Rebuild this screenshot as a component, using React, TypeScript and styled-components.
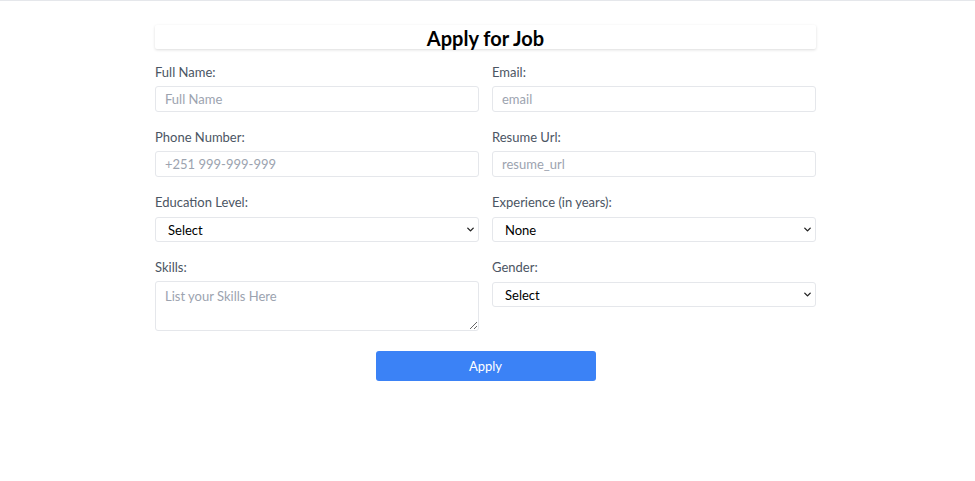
import React from "react";
import styled, { createGlobalStyle } from "styled-components";
import { ChevronDown } from "lucide-react";

const Global = createGlobalStyle`
  * { box-sizing: border-box; }
  html, body { margin: 0; padding: 0; background: #fff; }
  body { font-family: Lato, "Noto Sans", sans-serif; border-top: 1px solid #e5e7eb; }
`;

const Page = styled.div`
  display: flex;
  justify-content: center;
  padding-top: 24px;
  padding-right: 4px;
`;

const Card = styled.form`
  width: 661px;
  display: flex;
  flex-direction: column;
`;

const Header = styled.div`
  height: 24px;
  display: flex;
  align-items: center;
  justify-content: center;
  box-shadow: 0 1px 3px rgba(0, 0, 0, 0.14);
  border-radius: 2px;
`;

const Title = styled.h1`
  margin: 0;
  font-size: 20px;
  font-weight: 700;
  color: #000;
  line-height: 24px;
  padding-top: 2px;
`;

const Grid = styled.div`
  display: grid;
  grid-template-columns: 324px 324px;
  column-gap: 13px;
  row-gap: 16px;
  margin-top: 14px;
`;

const Field = styled.div`
  display: flex;
  flex-direction: column;
`;

const Label = styled.label`
  font-size: 13px;
  color: #4b5563;
  line-height: 18px;
  margin-bottom: 5px;
`;

const Input = styled.input`
  height: 26px;
  border: 1px solid #e5e7eb;
  border-radius: 3px;
  padding: 0 9px;
  font-family: inherit;
  font-size: 13px;
  color: #111;
  outline: none;
  &::placeholder { color: #9ca3af; }
`;

const TextArea = styled.textarea`
  height: 50px;
  border: 1px solid #e5e7eb;
  border-radius: 3px;
  padding: 6px 9px;
  font-family: inherit;
  font-size: 13px;
  color: #111;
  resize: vertical;
  outline: none;
  &::placeholder { color: #9ca3af; }
`;

const SelectWrap = styled.div`
  position: relative;
  height: 25px;
  margin-top: 1px;
`;

const Select = styled.select`
  appearance: none;
  width: 100%;
  height: 100%;
  border: 1px solid #e5e7eb;
  border-radius: 3px;
  background: #fff;
  padding: 0 12px;
  font-family: inherit;
  font-size: 13px;
  color: #000;
  outline: none;
`;

const Chevron = styled(ChevronDown)`
  position: absolute;
  right: 3px;
  top: 7px;
  pointer-events: none;
  color: #222;
`;

const ButtonRow = styled.div`
  display: flex;
  justify-content: center;
  margin-top: 20px;
`;

const Button = styled.button`
  width: 220px;
  height: 30px;
  background: #3b82f6;
  color: #fff;
  border: none;
  border-radius: 3px;
  font-family: inherit;
  font-size: 13px;
`;

const SelectField = ({ value }: { value: string }) => (
  <SelectWrap>
    <Select defaultValue={value}>
      <option>{value}</option>
    </Select>
    <Chevron size={11} strokeWidth={3} />
  </SelectWrap>
);

export default function App() {
  return (
    <>
      <Global />
      <Page>
        <Card onSubmit={(e) => e.preventDefault()}>
          <Header>
            <Title>Apply for Job</Title>
          </Header>
          <Grid>
            <Field>
              <Label>Full Name:</Label>
              <Input placeholder="Full Name" />
            </Field>
            <Field>
              <Label>Email:</Label>
              <Input placeholder="email" />
            </Field>
            <Field>
              <Label>Phone Number:</Label>
              <Input placeholder="+251 999-999-999" />
            </Field>
            <Field>
              <Label>Resume Url:</Label>
              <Input placeholder="resume_url" />
            </Field>
            <Field>
              <Label>Education Level:</Label>
              <SelectField value="Select" />
            </Field>
            <Field>
              <Label>Experience (in years):</Label>
              <SelectField value="None" />
            </Field>
            <Field>
              <Label>Skills:</Label>
              <TextArea placeholder="List your Skills Here" />
            </Field>
            <Field>
              <Label>Gender:</Label>
              <SelectField value="Select" />
            </Field>
          </Grid>
          <ButtonRow>
            <Button type="submit">Apply</Button>
          </ButtonRow>
        </Card>
      </Page>
    </>
  );
}
